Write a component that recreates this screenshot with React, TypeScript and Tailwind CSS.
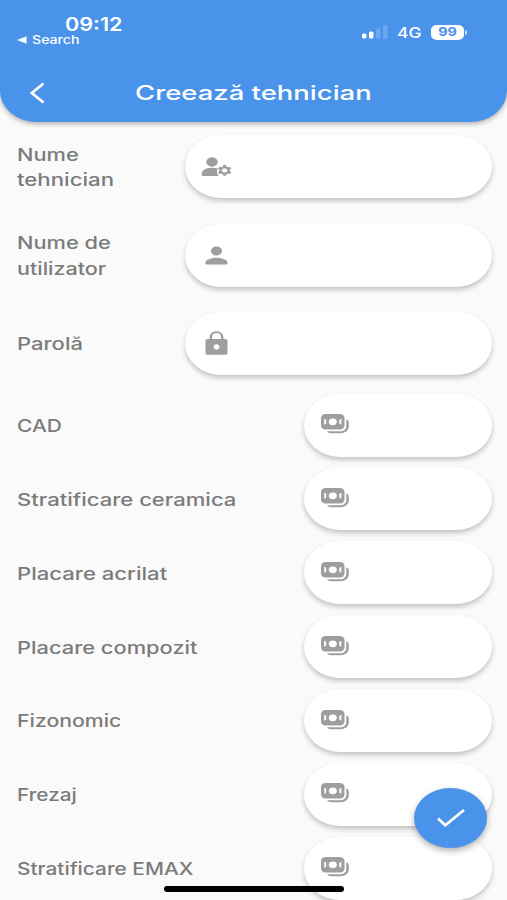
import type { ReactNode } from 'react';

type Field = {
    id: string;
    lines: { text: string; scale: string }[];
    icon: ReactNode;
};

const iconClass = 'w-[33px] h-[27px] shrink-0';

function TechnicianIcon() {
    return (
        <svg className={iconClass} viewBox="0 0 24 24" preserveAspectRatio="none" fill="#9e9e9e">
            <ellipse cx="8.7" cy="8" rx="4.2" ry="4.2" />
            <path d="M9 13.2c-4.1 0-7.700 1.800-7.700 5v1.300c0 .6.4 1 1 1h11.400c-1.100-1.400-1.600-3.200-1.300-5 .1-.7.3-1.300.6-1.800-1.200-.3-2.600-.5-4-.5z" />
            <path
                transform="translate(.9 .3) scale(1 .95)"
                fillRule="evenodd"
                d="M20.75 16c0-.22-.03-.42-.06-.63l1.14-1.01-1-1.73-1.45.49c-.32-.27-.68-.48-1.08-.63L18 11h-2l-.3 1.49c-.4.15-.76.36-1.08.63l-1.45-.49-1 1.73 1.14 1.01c-.03.21-.06.41-.06.63s.03.42.06.63l-1.14 1.01 1 1.73 1.45-.49c.32.27.68.48 1.08.63L16 21h2l.3-1.49c.4-.15.76-.36 1.08-.63l1.45.49 1-1.73-1.14-1.01c.03-.21.06-.41.06-.63zM17 18c-1.1 0-2-.9-2-2s.9-2 2-2 2 .9 2 2-.9 2-2 2z"
            />
        </svg>
    );
}

function PersonIcon() {
    return (
        <svg className={iconClass} viewBox="0 0 24 24" preserveAspectRatio="none" fill="#9e9e9e">
            <path d="M12 12c2.21 0 4-1.79 4-4s-1.79-4-4-4-4 1.79-4 4 1.79 4 4 4zm0 2c-2.67 0-8 1.34-8 4v1c0 .55.45 1 1 1h14c.55 0 1-.45 1-1v-1c0-2.66-5.33-4-8-4z" />
        </svg>
    );
}

function LockIcon() {
    return (
        <svg className={iconClass} viewBox="0 0 24 24" preserveAspectRatio="none" fill="#9e9e9e">
            <path d="M18.5 8H17V6c0-2.76-2.24-5-5-5S7 3.24 7 6v2H5.5C4.7 8 4 8.7 4 9.500v11c0 .8.7 1.500 1.500 1.500h13c.8 0 1.500-.7 1.500-1.500v-11c0-.8-.7-1.500-1.500-1.500zM12 17.300c-1.200 0-2.100-1-2.100-2.300s.9-2.300 2.100-2.300 2.100 1 2.100 2.300-.9 2.300-2.100 2.300zM8.700 8V6c0-1.800 1.500-3.300 3.300-3.300s3.300 1.500 3.300 3.300v2H8.700z" />
        </svg>
    );
}

function MoneyIcon() {
    return (
        <svg className="h-[20px] w-[28px] shrink-0" viewBox="0 0 28 20" fill="none">
            <rect width="23.5" height="15.5" rx="4.5" ry="4" fill="#9e9e9e" />
            <ellipse cx="11.8" cy="7.8" rx="4" ry="3.4" fill="white" />
            <path d="M3.2 5c1.2 0 2 .6 2 1.5v2.6c0 .9-.8 1.5-2 1.5z" fill="white" />
            <path d="M20.3 5c-1.2 0-2 .6-2 1.5v2.6c0 .9.8 1.5 2 1.5z" fill="white" />
            <path
                d="M25.3 5.2c1.5.6 2.5 1.8 2.5 3.300v3.700c0 4-3.600 7-8.200 7h-9.300c-1.900 0-3.500-.7-4.300-1.900h13.100c3.500 0 6.200-2.300 6.200-5.400z"
                fill="#9e9e9e"
            />
        </svg>
    );
}

const accountFields: Field[] = [
    {
        id: 'name',
        lines: [
            { text: 'Nume', scale: 'scale-x-[1.28]' },
            { text: 'tehnician', scale: 'scale-x-[1.305]' },
        ],
        icon: <TechnicianIcon />,
    },
    {
        id: 'username',
        lines: [
            { text: 'Nume de', scale: 'scale-x-[1.28]' },
            { text: 'utilizator', scale: 'scale-x-[1.265]' },
        ],
        icon: <PersonIcon />,
    },
    { id: 'password', lines: [{ text: 'Parolă', scale: 'scale-x-[1.295]' }], icon: <LockIcon /> },
];

const priceFields = [
    { label: 'CAD', scale: 'scale-x-[1.23]' },
    { label: 'Stratificare ceramica', scale: 'scale-x-[1.297]' },
    { label: 'Placare acrilat', scale: 'scale-x-[1.3]' },
    { label: 'Placare compozit', scale: 'scale-x-[1.285]' },
    { label: 'Fizonomic', scale: 'scale-x-[1.25]' },
    { label: 'Frezaj', scale: 'scale-x-[1.22]' },
    { label: 'Stratificare EMAX', scale: 'scale-x-[1.225]' },
];

function Label({ text, scale }: { text: string; scale: string }) {
    return <span className={`block w-max origin-left whitespace-nowrap ${scale}`}>{text}</span>;
}

function StatusBar() {
    return (
        <div className="flex h-[62px] justify-between pl-[17px] pr-[40px]">
            <div className="pt-[14px]">
                <div className="ml-[48px] h-[20px] w-max origin-left scale-x-[1.2] text-[18px] font-semibold leading-[21px]">
                    09:12
                </div>
                <div className="flex h-[12px] items-center">
                    <svg className="mr-[5px] h-[8px] w-[10px]" viewBox="0 0 10 8" fill="white">
                        <path d="M0 4 9.5.3v7.4z" />
                    </svg>
                    <span className="origin-left scale-x-[1.23] text-[11.5px] font-medium leading-[12px]">Search</span>
                </div>
            </div>
            <div className="flex h-[64px] items-center">
                <svg className="h-[14px] w-[26px]" viewBox="0 0 26 14" fill="white">
                    <rect x="0" y="8.5" width="4.5" height="5" rx="1.5" />
                    <rect x="7" y="6.5" width="4.5" height="7" rx="1.5" />
                    <rect x="14" y="3.5" width="4.5" height="10" rx="1.5" opacity=".2" />
                    <rect x="21" y="0.5" width="4.5" height="13" rx="1.5" opacity=".2" />
                </svg>
                <span className="ml-[9px] w-[34px] pt-[2px]">
                    <span className="block w-max origin-left scale-x-[1.2] text-[14.5px] font-medium leading-none">4G</span>
                </span>
                <span className="flex h-[15px] w-[33px] items-center justify-center rounded-[6px/5px] bg-white">
                    <span className="mt-px scale-x-[1.25] text-[11.5px] font-bold leading-[15px] text-[#4993ea]">99</span>
                </span>
                <span className="ml-px h-[5px] w-[2px] rounded-r-full bg-white/70" />
            </div>
        </div>
    );
}

export default function App() {
    return (
        <div className="relative h-[900px] w-[507px] overflow-hidden bg-[#fafafa] font-['Inter',sans-serif]">
            {/* Header */}
            <header className="h-[122px] rounded-b-[37px_31px] bg-[#4993ea] text-white shadow-[0_2px_5px_rgba(0,0,0,0.3)]">
                <StatusBar />
                <div className="flex h-[62px] items-center pl-[30px]">
                    <svg className="h-[22px] w-[15px]" viewBox="0 0 15 22" fill="none" stroke="white" strokeWidth="2.8">
                        <path d="M13.5 1.5 1.8 11l11.7 9.5" />
                    </svg>
                    <h1 className="ml-[90px] w-max origin-left scale-x-[1.373] whitespace-nowrap text-[20px] font-medium">
                        Creează tehnician
                    </h1>
                </div>
            </header>

            <main className="pl-[16.5px] pr-[15px] pt-[13px] text-[17px] font-medium leading-[25.3px] text-[#7b7b7b]">
                {/* Account */}
                <div className="flex flex-col gap-[25.5px]">
                    {accountFields.map((field) => (
                        <div key={field.id} className="flex h-[63px] items-center justify-between">
                            <div className="pt-[3px]">
                                {field.lines.map((line) => (
                                    <Label key={line.text} text={line.text} scale={line.scale} />
                                ))}
                            </div>
                            <div className="flex h-[63px] w-[307px] items-center rounded-[37px/31px] bg-white pl-[14.5px] shadow-[0_3px_5px_rgba(0,0,0,0.22)]">
                                {field.icon}
                            </div>
                        </div>
                    ))}
                </div>

                {/* Prices */}
                <div className="mt-[18.5px] flex flex-col gap-[10.9px]">
                    {priceFields.map((field) => (
                        <div key={field.label} className="flex h-[63px] items-center justify-between">
                            <div className="pt-[3px]">
                                <Label text={field.label} scale={field.scale} />
                            </div>
                            <div className="flex h-[63px] w-[188px] shrink-0 items-center rounded-[37px/31px] bg-white pb-[2px] pl-[17px] shadow-[0_3px_5px_rgba(0,0,0,0.22)]">
                                <MoneyIcon />
                            </div>
                        </div>
                    ))}
                </div>
            </main>

            {/* Save button */}
            <button className="absolute left-[414px] top-[788px] flex h-[60px] w-[73px] items-center justify-center rounded-[50%] bg-[#4993ea] shadow-[0_3px_6px_rgba(0,0,0,0.3)]">
                <svg className="h-[20px] w-[30px]" viewBox="0 0 30 20" fill="none" stroke="white" strokeWidth="2.7">
                    <path d="m2 10.5 7.3 6.8L28 2" />
                </svg>
            </button>

            {/* Home indicator */}
            <div className="absolute left-[164px] top-[886px] h-[5.5px] w-[180px] rounded-full bg-black" />
        </div>
    );
}
